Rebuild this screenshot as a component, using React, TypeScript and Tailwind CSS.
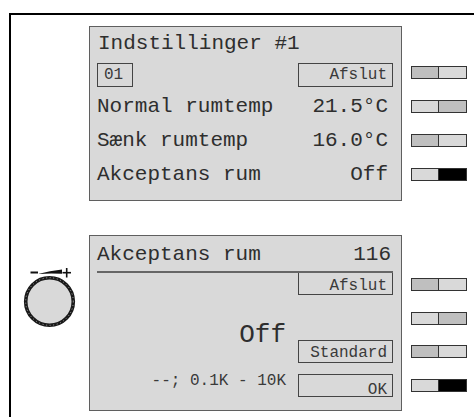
import React from 'react';

const mono = { fontFamily: '"Courier New", "Liberation Mono", monospace' };

function Toggle({ left, right }: { left: string; right: string }) {
  return (
    <div className="flex w-[56px] h-[13px] border border-[#333]">
      <div className={`w-[27px] border-r border-[#333] ${left}`} />
      <div className={`flex-1 ${right}`} />
    </div>
  );
}

function Knob() {
  return (
    <svg width="60" height="68" viewBox="0 0 60 68" className="ml-[9px] mt-[27px]">
      <line x1="10.5" y1="10.5" x2="18" y2="10.5" stroke="#111" strokeWidth="2" />
      <path d="M18 12 Q30 8.5 42 7.5 L42 11.8 Q30 11 18 12 Z" fill="#111" />
      <line x1="42.5" y1="10.7" x2="51" y2="10.7" stroke="#111" strokeWidth="1.6" />
      <line x1="46.7" y1="6" x2="46.7" y2="15.5" stroke="#111" strokeWidth="1.6" />
      <circle cx="29.5" cy="39.5" r="23.8" fill="#d9d9d9" stroke="#1a1a1a" strokeWidth="3.6" />
      <circle cx="29.5" cy="39.5" r="23.8" fill="none" stroke="#b0b0b0" strokeWidth="0.9" strokeDasharray="1 2.6" />
    </svg>
  );
}

function Box({ children, className }: { children: React.ReactNode; className: string }) {
  return <div className={`border-[#444] text-[16px] text-[#3a3a3a] ${className}`}>{children}</div>;
}

export default function App() {
  return (
    <div className="w-[474px] h-[417px] overflow-hidden bg-white flex flex-col" style={mono}>
      <div className="flex-1 ml-[9px] mt-[13px] border-t-2 border-l-2 border-black">
        {/* Oversigt */}
        <div className="flex mt-[11px]">
          <div className="w-[78px]" />
          <div className="w-[313px] h-[175px] border border-[#5f5f5f] bg-[#d9d9d9] pl-[7px] pr-[8px] pt-[2px] text-[#2e2e2e]">
            <div className="text-[21px] leading-[30px] pl-[1px]">Indstillinger #1</div>
            <div className="mt-[4px] mb-[3px] flex justify-between">
              <Box className="w-[36px] h-[24px] border leading-[22px] pl-[6px]">01</Box>
              <Box className="w-[95px] h-[24px] border leading-[22px] text-right pr-[5px]">Afslut</Box>
            </div>
            <div className="flex justify-between text-[21px] leading-[34px] pr-[5px]">
              <span>Normal rumtemp</span>
              <span>21.5°C</span>
            </div>
            <div className="flex justify-between text-[21px] leading-[34px] pr-[5px]">
              <span>Sænk rumtemp</span>
              <span>16.0°C</span>
            </div>
            <div className="flex justify-between text-[21px] leading-[34px] pr-[5px]">
              <span>Akceptans rum</span>
              <span>Off</span>
            </div>
          </div>
          <div className="ml-[9px] pt-[40px] flex flex-col gap-[21px]">
            <Toggle left="bg-[#bfbfbf]" right="bg-[#d9d9d9]" />
            <Toggle left="bg-[#d9d9d9]" right="bg-[#bfbfbf]" />
            <Toggle left="bg-[#bfbfbf]" right="bg-[#d9d9d9]" />
            <Toggle left="bg-[#d9d9d9]" right="bg-black" />
          </div>
        </div>

        {/* Redigering */}
        <div className="flex mt-[34px]">
          <div className="w-[78px]">
            <Knob />
          </div>
          <div className="w-[313px] h-[176px] border border-[#5f5f5f] bg-[#d9d9d9] pl-[7px] pr-[8px] pt-[4px] text-[#2e2e2e]">
            <div className="flex justify-between text-[21px] leading-[30px] pr-[2px]">
              <span>Akceptans rum</span>
              <span>116</span>
            </div>
            <div className="mt-[1px] h-[2px] bg-[#666]" />
            <div className="flex">
              <div className="flex-1 flex flex-col items-end pr-[12px]">
                <div className="mt-[47px] text-[26px] leading-[30px]">Off</div>
                <div className="mt-[20px] text-[16px] leading-[22px] text-[#3a3a3a]">--; 0.1K - 10K</div>
              </div>
              <div className="w-[95px] flex flex-col">
                <Box className="h-[22px] border-x border-b pt-[2px] leading-[22px] text-right pr-[5px]">Afslut</Box>
                <Box className="mt-[45px] h-[23px] border pt-[2px] leading-[21px] text-right pr-[5px]">Standard</Box>
                <Box className="mt-[11px] h-[23px] border pt-[5px] leading-[21px] text-right pr-[5px]">OK</Box>
              </div>
            </div>
          </div>
          <div className="ml-[9px] pt-[43px] flex flex-col gap-[20.5px]">
            <Toggle left="bg-[#bfbfbf]" right="bg-[#d9d9d9]" />
            <Toggle left="bg-[#d9d9d9]" right="bg-[#bfbfbf]" />
            <Toggle left="bg-[#bfbfbf]" right="bg-[#d9d9d9]" />
            <Toggle left="bg-[#d9d9d9]" right="bg-black" />
          </div>
        </div>
      </div>
    </div>
  );
}
